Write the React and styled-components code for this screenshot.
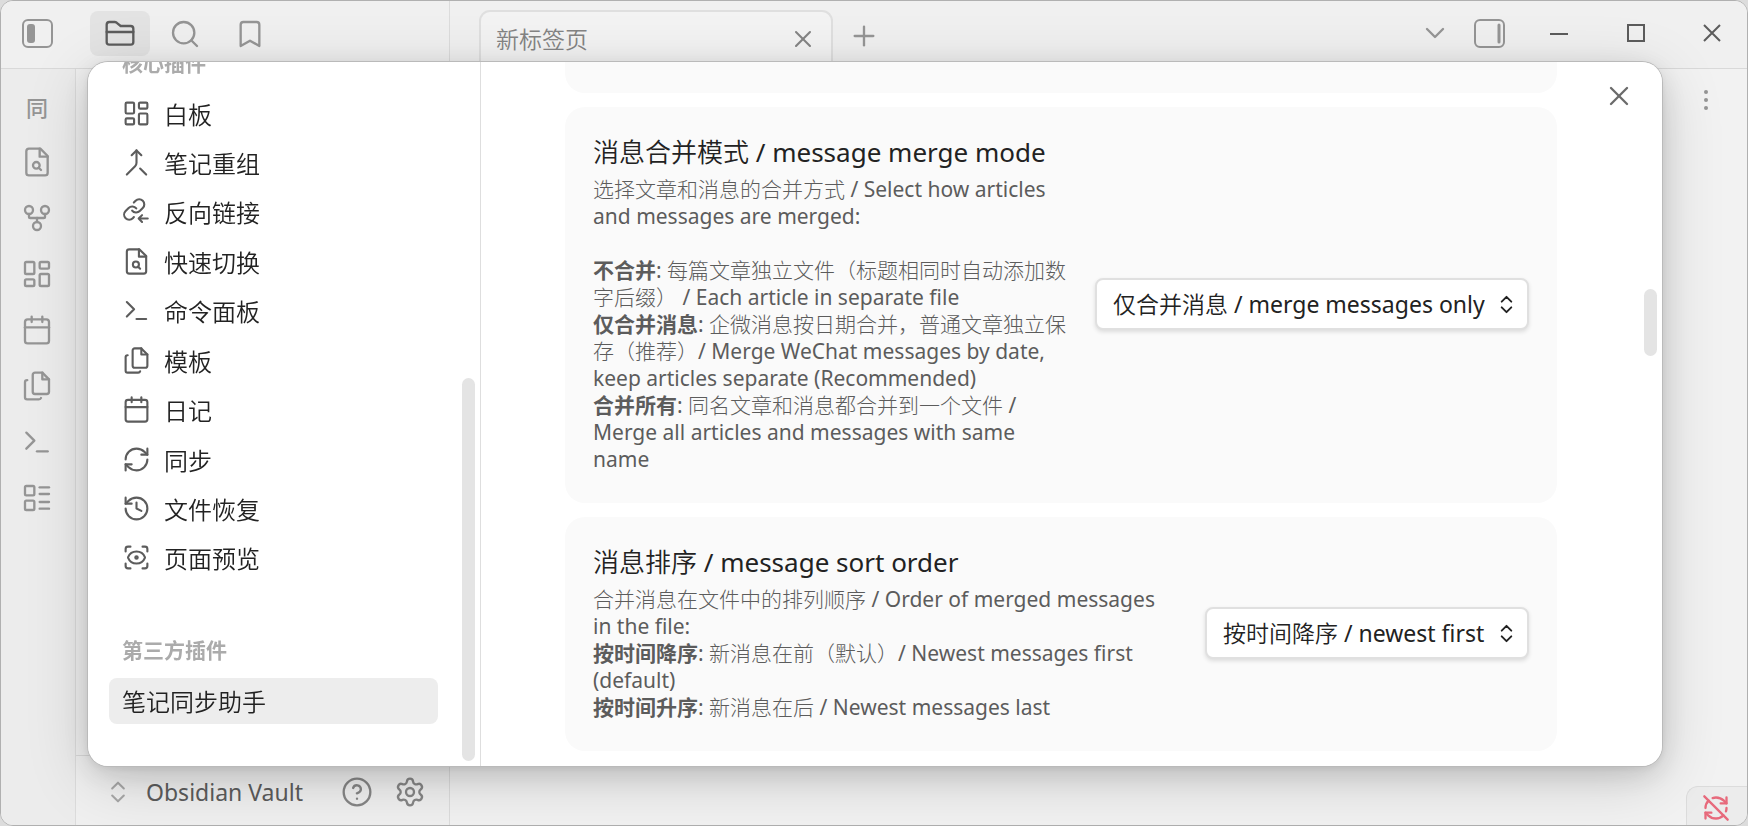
import React from 'react'
import styled, { createGlobalStyle } from 'styled-components'
import {
  Bookmark,
  Calendar,
  ChevronDown,
  ChevronsUpDown,
  CircleHelp,
  GitFork,
  History,
  LayoutDashboard,
  LayoutList,
  Merge,
  Plus,
  RefreshCw,
  RefreshCwOff,
  ScanEye,
  Search,
  Settings,
  Terminal,
  X,
} from 'lucide-react'

const GlobalStyle = createGlobalStyle`
  * {
    box-sizing: border-box;
  }
  body {
    margin: 0;
    background: #dcdcdc;
    color: #222;
    font-family: 'Noto Sans', 'Noto Sans CJK SC DemiLight', 'Noto Sans CJK SC', sans-serif;
    overflow: hidden;
  }
  button, select {
    font: inherit;
    color: inherit;
  }
  button {
    display: flex;
    align-items: center;
    padding: 0;
    border: 0 none;
    background: none;
    cursor: pointer;
  }
  svg {
    flex: none;
    display: block;
  }
`

const Window = styled.div`
  height: 100vh;
  display: flex;
  flex-direction: column;
  border: 1px solid #b0b0b0;
  border-radius: 13px;
  background: #f2f2f2;
  overflow: hidden;
`

const TitleBar = styled.header`
  flex: none;
  height: 68px;
  display: flex;
  background: #f0f0f0;
  border-bottom: 1px solid #d9d9d9;
  color: #959595;
`

const TitleLeft = styled.div`
  width: 449px;
  display: flex;
  align-items: flex-start;
  gap: 5px;
  padding: 10px 0 0 20px;
  border-right: 1px solid #dcdcdc;
`

const PanelToggle = styled.button`
  height: 45px;
  margin-right: 32px;
`

const SideTab = styled.button`
  width: 60px;
  height: 45px;
  justify-content: center;
  border-radius: 8px;
  background: ${props => props.$active ? '#e3e3e3' : 'none'};
  color: ${props => props.$active ? '#5c5c5c' : '#959595'};
`

const Tabs = styled.div`
  flex: 1;
  display: flex;
  align-items: flex-start;
  padding: 9px 0 0 29px;
`

const Tab = styled.div`
  width: 354px;
  height: 56px;
  display: flex;
  align-items: center;
  justify-content: space-between;
  padding: 0 14px 0 15px;
  border: 2px solid #dfdfdf;
  border-bottom: 0 none;
  border-radius: 11px 11px 0 0;
  background: #f3f3f3;
  color: #848484;
  font-size: 23px;
  line-height: 54px;
`

const NewTab = styled.button`
  height: 52px;
  margin-left: 15px;
`

const WindowControls = styled.div`
  display: flex;
  align-items: center;
  height: 64px;
`

const ControlButton = styled.button`
  width: ${props => props.$width}px;
  height: 64px;
  justify-content: center;
  color: ${props => props.$muted ? '#959595' : '#5c5c5c'};
`

const Workspace = styled.div`
  flex: 1;
  display: flex;
  min-height: 0;
`

const Ribbon = styled.nav`
  width: 75px;
  display: flex;
  flex-direction: column;
  align-items: center;
  gap: 24px;
  padding: 21px 2px 0 0;
  border-right: 1px solid #dcdcdc;
  background: #ececec;
  color: #959595;
`

const RibbonButton = styled.button`
  width: 32px;
  height: 32px;
  justify-content: center;
  font-family: 'Noto Sans CJK SC', sans-serif;
  font-size: 22px;
  font-weight: 500;
`

const FileSidebar = styled.aside`
  width: 374px;
  display: flex;
  flex-direction: column;
  justify-content: flex-end;
  border-right: 1px solid #dcdcdc;
  background: #f0f0f0;
`

const VaultProfile = styled.div`
  height: 70px;
  display: flex;
  align-items: center;
  padding: 3px 23px 0 28px;
  border-top: 1px solid #d9d9d9;
  color: #868686;
`

const VaultName = styled.button`
  flex: 1;
  gap: 14px;
  color: #5c5c5c;
  font-size: 23px;
  line-height: 32px;
  svg {
    color: #a8a8a8;
  }
`

const HelpButton = styled.button`
  margin-right: 21px;
`

const Editor = styled.main`
  flex: 1;
  display: flex;
  flex-direction: column;
  align-items: flex-end;
  justify-content: space-between;
`

const MoreButton = styled.button`
  padding: 15px 25px 0 0;
  color: #959595;
`

const StatusBar = styled.footer`
  width: 61px;
  height: 39px;
  display: flex;
  align-items: center;
  justify-content: center;
  padding: 4px 2px 0 0;
  border: 1px solid #dcdcdc;
  border-width: 1px 0 0 1px;
  border-radius: 12px 0 0 0;
  background: #ececec;
  color: #e76a7c;
`

const Overlay = styled.div`
  position: fixed;
  inset: 0;
  display: flex;
  padding: 62px 86px 60px 88px;
`

/* the shadow sits on a wrapper so that the modal can clip its panels */
const ModalShadow = styled.div`
  flex: 1;
  display: flex;
  border-radius: 20px;
  box-shadow:
    0 0 0 1px #bababa,
    0 2px 8px rgba(0, 0, 0, 0.07),
    0 8px 30px rgba(0, 0, 0, 0.13),
    0 14px 64px rgba(0, 0, 0, 0.16);
`

const Modal = styled.section`
  position: relative;
  flex: 1;
  display: flex;
  border-radius: 20px;
  background: #fff;
  overflow: hidden;
`

const SettingsNav = styled.nav`
  width: 393px;
  display: flex;
  border-right: 1px solid #dedede;
`

const NavScroll = styled.div`
  flex: 1;
  display: flex;
  flex-direction: column;
  justify-content: flex-end;
  padding: 0 24px 42px 21px;
  overflow: hidden;
`

const NavHeading = styled.h2`
  flex: none;
  height: 46px;
  margin: ${props => props.$spaced ? 45 : 0}px 0 5px;
  padding-left: 13px;
  color: #ababab;
  font-family: 'Noto Sans', 'Noto Sans CJK SC', sans-serif;
  font-size: 21px;
  font-weight: 700;
  line-height: 46px;
`

const NavList = styled.div`
  flex: none;
  min-height: 491px;
  display: flex;
  flex-direction: column;
  justify-content: space-between;
`

const NavItem = styled.button`
  flex: none;
  height: 46px;
  gap: 13px;
  padding: 0 0 2px 13px;
  border-radius: 8px;
  background: ${props => props.$active ? '#ededed' : 'none'};
  font-size: 24px;
  svg {
    color: #5c5c5c;
  }
`

const Thumb = styled.div`
  width: 13px;
  height: ${props => props.$length}px;
  border-radius: 7px;
  background: #e4e4e4;
`

const NavGutter = styled.div`
  width: 18px;
  display: flex;
  align-items: flex-end;
  padding-bottom: 5px;
`

const ContentGutter = styled.div`
  width: 18px;
  padding-top: 227px;
`

const Content = styled.div`
  flex: 1;
  display: flex;
  flex-direction: column;
  justify-content: flex-end;
  gap: 14px;
  padding: 0 87px 15px 84px;
  overflow: hidden;
`

const SettingItem = styled.div`
  flex: none;
  min-height: 100px;
  display: flex;
  align-items: center;
  gap: 21px;
  padding: 28px 28px 30px;
  border-radius: 20px;
  background: #fafafa;
`

const SettingInfo = styled.div`
  flex: 1;
`

const SettingName = styled.label`
  display: block;
  margin-bottom: 7px;
  font-size: 26px;
  line-height: 34px;
`

const SettingDescription = styled.div`
  color: #5c5c5c;
  font-family: 'Noto Sans', 'Noto Sans CJK SC Light', 'Noto Sans CJK SC', sans-serif;
  font-size: 21px;
  line-height: 27px;
  b {
    font-family: 'Noto Sans', 'Noto Sans CJK SC', sans-serif;
    font-weight: 700;
  }
`

const SelectBox = styled.div`
  display: grid;
  align-items: center;
  justify-items: end;
  select, svg {
    grid-area: 1 / 1;
  }
  select {
    height: 52px;
    padding: 0 42px 0 16px;
    appearance: none;
    border: 2px solid #e0e0e0;
    border-radius: 8px;
    background: #fff;
    box-shadow: 0 2px 4px rgba(0, 0, 0, 0.12);
    font-size: 23px;
  }
  svg {
    margin-right: 11px;
    pointer-events: none;
  }
`

const CloseButton = styled.button`
  position: absolute;
  top: 18px;
  right: 27px;
  color: #6a6a6a;
`

const LineIcon = ({ size, children }) => (
  <svg
    width={size}
    height={size}
    viewBox="0 0 24 24"
    fill="none"
    stroke="currentColor"
    strokeWidth="1.75"
    strokeLinecap="round"
    strokeLinejoin="round"
  >
    {children}
  </svg>
)

const FileSearchIcon = ({ size }) => (
  <LineIcon size={size}>
    <path d="M14.5 2H6a2 2 0 0 0-2 2v16a2 2 0 0 0 2 2h12a2 2 0 0 0 2-2V7.5L14.5 2z" />
    <path d="M14 2v6h6" />
    <circle cx="11.5" cy="14.5" r="2.5" />
    <path d="M13.3 16.3 15 18" />
  </LineIcon>
)

const FilesIcon = ({ size }) => (
  <LineIcon size={size}>
    <path d="M16 2h-5.5a1.7 1.7 0 0 0-1.7 1.7v12.6a1.7 1.7 0 0 0 1.7 1.7h8.8a1.7 1.7 0 0 0 1.7-1.7V7L16 2z" />
    <path d="M16 2v5h5" />
    <path d="M4.7 7.6h-.1A1.6 1.6 0 0 0 3 9.2v11.2A1.6 1.6 0 0 0 4.6 22h8.8c.8 0 1.4-.4 1.6-1" />
  </LineIcon>
)

const BacklinkIcon = ({ size }) => (
  <LineIcon size={size}>
    <path d="M8.4 11.2a4.2 4.2 0 0 0 6.3.45l2.5-2.5a4.2 4.2 0 0 0-5.95-5.95L9.8 4.65" />
    <path d="M11.8 9.5a4.2 4.2 0 0 0-6.3-.45l-2.5 2.5A4.2 4.2 0 0 0 8.95 17.5l.9-.9" />
    <path d="M21.3 17.8h-7M16.6 15l-2.8 2.8 2.8 2.8" />
  </LineIcon>
)

const LeftPanelIcon = () => (
  <svg width="32" height="30" viewBox="0 0 32 30" fill="none">
    <rect x="2" y="1" width="29" height="27" rx="5" stroke="#959595" strokeWidth="2" />
    <rect x="6" y="5" width="8" height="19" rx="3" fill="#959595" />
  </svg>
)

const RightPanelIcon = () => (
  <svg width="32" height="30" viewBox="0 0 32 30" fill="none" stroke="#959595" strokeWidth="2">
    <rect x="1" y="2" width="29" height="27" rx="5" />
    <path d="M25 7v17" strokeWidth="3" strokeLinecap="round" />
  </svg>
)

const coreItems = [
  ['白板', LayoutDashboard],
  ['笔记重组', Merge],
  ['反向链接', BacklinkIcon],
  ['快速切换', FileSearchIcon],
  ['命令面板', Terminal],
  ['模板', FilesIcon],
  ['日记', Calendar],
  ['同步', RefreshCw],
  ['文件恢复', History],
  ['页面预览', ScanEye],
]

const ribbonItems = [
  ['快速切换', FileSearchIcon],
  ['关系图谱', GitFork],
  ['白板', LayoutDashboard],
  ['日记', Calendar],
  ['模板', FilesIcon],
  ['命令面板', Terminal],
  ['数据库', LayoutList],
]

const Dropdown = ({ id, options }) => (
  <SelectBox>
    <select id={id} defaultValue={options[0]}>
      {options.map(option => <option key={option}>{option}</option>)}
    </select>
    <ChevronsUpDown size={23} strokeWidth={2} />
  </SelectBox>
)

const TitleBarRow = () => (
  <TitleBar>
    <TitleLeft>
      <PanelToggle aria-label="左侧边栏"><LeftPanelIcon /></PanelToggle>
      <SideTab $active aria-label="文件列表">
        <LineIcon size={32}>
          <path d="M4 20h16a2 2 0 0 0 2-2V8a2 2 0 0 0-2-2h-7.5L9.8 3.8A2 2 0 0 0 8.2 3H4a2 2 0 0 0-2 2v13c0 1.1.9 2 2 2Z" />
          <path d="M2 10.5h20" />
        </LineIcon>
      </SideTab>
      <SideTab aria-label="搜索"><Search size={32} strokeWidth={1.75} /></SideTab>
      <SideTab aria-label="书签"><Bookmark size={32} strokeWidth={1.75} /></SideTab>
    </TitleLeft>
    <Tabs>
      <Tab>
        新标签页
        <button aria-label="关闭标签页"><X size={28} strokeWidth={1.75} /></button>
      </Tab>
      <NewTab aria-label="新建标签页"><Plus size={32} strokeWidth={1.75} /></NewTab>
    </Tabs>
    <WindowControls>
      <ControlButton $width={42} $muted aria-label="标签页列表"><ChevronDown size={32} strokeWidth={1.75} /></ControlButton>
      <ControlButton $width={67} $muted aria-label="右侧边栏"><RightPanelIcon /></ControlButton>
      <ControlButton $width={71} aria-label="最小化">
        <svg width="20" height="20" stroke="currentColor" strokeWidth="2"><path d="M1 11h18" /></svg>
      </ControlButton>
      <ControlButton $width={83} aria-label="最大化">
        <svg width="20" height="20" fill="none" stroke="currentColor" strokeWidth="2"><path d="M2 2h16v16H2z" /></svg>
      </ControlButton>
      <ControlButton $width={70} aria-label="关闭">
        <svg width="20" height="20" stroke="currentColor" strokeWidth="2"><path d="M2 2l16 16M18 2L2 18" /></svg>
      </ControlButton>
    </WindowControls>
  </TitleBar>
)

const SettingsModal = () => (
  <ModalShadow>
    <Modal role="dialog" aria-label="设置">
      <SettingsNav>
        <NavScroll>
          <NavHeading>核心插件</NavHeading>
          <NavList>
            {coreItems.map(([name, Icon]) => (
              <NavItem key={name}>
                <Icon size={29} strokeWidth={1.75} />
                {name}
              </NavItem>
            ))}
          </NavList>
          <NavHeading $spaced>第三方插件</NavHeading>
          <NavItem $active>笔记同步助手</NavItem>
        </NavScroll>
        <NavGutter><Thumb $length={383} /></NavGutter>
      </SettingsNav>

      <Content>
        <SettingItem />
        <SettingItem>
          <SettingInfo>
            <SettingName htmlFor="merge-mode">消息合并模式 / message merge mode</SettingName>
            <SettingDescription>
              选择文章和消息的合并方式 / Select how articles and messages are merged:
              <br />
              <br />
              <b>不合并</b>: 每篇文章独立文件（标题相同时自动添加数字后缀） / Each article in separate file
              <br />
              <b>仅合并消息</b>: 企微消息按日期合并，普通文章独立保存（推荐）/ Merge WeChat messages by date, keep articles separate (Recommended)
              <br />
              <b>合并所有</b>: 同名文章和消息都合并到一个文件 / Merge all articles and messages with same name
            </SettingDescription>
          </SettingInfo>
          <Dropdown id="merge-mode" options={['仅合并消息 / merge messages only', '不合并 / no merge', '合并所有 / merge all']} />
        </SettingItem>
        <SettingItem>
          <SettingInfo>
            <SettingName htmlFor="sort-order">消息排序 / message sort order</SettingName>
            <SettingDescription>
              合并消息在文件中的排列顺序 / Order of merged messages in&nbsp;the file:
              <br />
              <b>按时间降序</b>: 新消息在前（默认）/ Newest messages first (default)
              <br />
              <b>按时间升序</b>: 新消息在后 / Newest messages last
            </SettingDescription>
          </SettingInfo>
          <Dropdown id="sort-order" options={['按时间降序 / newest first', '按时间升序 / newest last']} />
        </SettingItem>
      </Content>
      <ContentGutter><Thumb $length={67} /></ContentGutter>
      <CloseButton aria-label="关闭设置"><X size={32} strokeWidth={1.75} /></CloseButton>
    </Modal>
  </ModalShadow>
)

export default function App () {
  return (
    <>
      <GlobalStyle />
      <Window>
        <TitleBarRow />
        <Workspace>
          <Ribbon>
            <RibbonButton>同</RibbonButton>
            {ribbonItems.map(([name, Icon]) => (
              <RibbonButton key={name} aria-label={name}><Icon size={32} strokeWidth={1.75} /></RibbonButton>
            ))}
          </Ribbon>
          <FileSidebar>
            <VaultProfile>
              <VaultName><ChevronsUpDown size={28} strokeWidth={1.75} />Obsidian Vault</VaultName>
              <HelpButton aria-label="帮助"><CircleHelp size={32} strokeWidth={1.75} /></HelpButton>
              <button aria-label="设置"><Settings size={32} strokeWidth={1.75} /></button>
            </VaultProfile>
          </FileSidebar>
          <Editor>
            <MoreButton aria-label="更多选项">
              <svg width="32" height="32" fill="currentColor">
                <circle cx="16" cy="8" r="2" />
                <circle cx="16" cy="16" r="2" />
                <circle cx="16" cy="24" r="2" />
              </svg>
            </MoreButton>
            <StatusBar><RefreshCwOff size={28} strokeWidth={2} /></StatusBar>
          </Editor>
        </Workspace>
      </Window>
      <Overlay>
        <SettingsModal />
      </Overlay>
    </>
  )
}
